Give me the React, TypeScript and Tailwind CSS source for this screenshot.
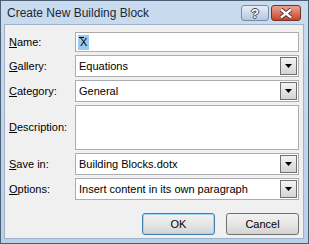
import React from "react";

const font = { fontFamily: '"Liberation Sans", Arial, sans-serif' };

function Label({ k, rest }: { k: string; rest: string }) {
  return (
    <span className="w-[66px] shrink-0 text-[11px] text-black">
      <span className="underline underline-offset-[1px]">{k}</span>
      {rest}
    </span>
  );
}

function Arrow() {
  return (
    <div className="w-[17px] h-full border border-[#707070] bg-gradient-to-b from-[#f4f4f4] to-[#d4d4d4] flex items-center justify-center">
      <svg width="7" height="4" viewBox="0 0 7 4">
        <path d="M0 0h7L3.5 4z" fill="#000" />
      </svg>
    </div>
  );
}

function Select({ value }: { value: string }) {
  return (
    <div className="flex-1 h-[22px] border border-[#abadb3] bg-white flex items-center">
      <span className="flex-1 pl-[3px] text-[11px] text-black">{value}</span>
      <div className="h-full p-px">
        <Arrow />
      </div>
    </div>
  );
}

export default function App() {
  return (
    <div
      className="w-[309px] h-[244px] border border-[#4d5f75] bg-gradient-to-b from-[#c9dbef] to-[#b9d0e9] flex flex-col pl-[3px] pr-[4px] pb-[4px]"
      style={font}
    >
      {/* title bar */}
      <div className="h-[23px] flex items-start">
        <span className="flex-1 pl-[3px] pt-[5px] text-[12px] leading-[14px] text-[#1e2733]">
          Create New Building Block
        </span>
        <div className="mt-[4px] w-[28px] h-[16px] rounded-[3px] border border-[#7b8ca2] bg-gradient-to-b from-[#e6eef8] to-[#b3c8e2] flex items-center justify-center text-[13px] leading-[13px] font-bold text-white [text-shadow:1px_0_0_#3b4a5c,-1px_0_0_#3b4a5c,0_1px_0_#3b4a5c,0_-1px_0_#3b4a5c]">
          ?
        </div>
        <div className="mt-[4px] ml-[2px] mr-[3px] w-[30px] h-[16px] rounded-[3px] border border-[#7c3024] bg-gradient-to-b from-[#e9a193] to-[#c4432c] flex items-center justify-center">
          <svg width="14" height="11" viewBox="0 0 14 11">
            <path d="M2 1.5l10 8M12 1.5l-10 8" stroke="#3a1a14" strokeWidth="4" />
            <path d="M2 1.5l10 8M12 1.5l-10 8" stroke="#fff" strokeWidth="2.4" />
          </svg>
        </div>
      </div>

      {/* client area */}
      <div className="flex-1 bg-[#f0f0f0] border border-[#9fb2c9] flex flex-col gap-[3px] pt-[7px] pl-[4px] pr-[4px]">
        <div className="flex items-center">
          <Label k="N" rest="ame:" />
          <div className="flex-1 h-[20px] border border-[#abadb3] bg-white flex items-center pl-[2px]">
            <span className="relative bg-[#99c9ef] text-[11px] leading-[15px] text-black px-[2px]">
              <span className="absolute left-[1px] top-[2px] w-[5px] h-px bg-black" />
              X
            </span>
          </div>
        </div>
        <div className="flex items-center">
          <Label k="G" rest="allery:" />
          <Select value="Equations" />
        </div>
        <div className="flex items-center">
          <Label k="C" rest="ategory:" />
          <Select value="General" />
        </div>
        <div className="flex items-center">
          <Label k="D" rest="escription:" />
          <div className="flex-1 h-[45px] border border-[#abadb3] bg-white" />
        </div>
        <div className="flex items-center">
          <Label k="S" rest="ave in:" />
          <Select value="Building Blocks.dotx" />
        </div>
        <div className="flex items-center">
          <Label k="O" rest="ptions:" />
          <Select value="Insert content in its own paragraph" />
        </div>
        <div className="flex justify-end gap-[11px] mt-[10px]">
          <button className="w-[73px] h-[22px] rounded-[3px] border border-[#3c7fb1] bg-gradient-to-b from-[#f2f2f2] via-[#e6e6e6] to-[#d3d3d3] text-[11px] text-black shadow-[inset_0_0_0_1px_#9fd8f5]">
            OK
          </button>
          <button className="w-[73px] h-[22px] rounded-[3px] border border-[#707070] bg-gradient-to-b from-[#f2f2f2] via-[#e6e6e6] to-[#d3d3d3] text-[11px] text-black">
            Cancel
          </button>
        </div>
      </div>
    </div>
  );
}
